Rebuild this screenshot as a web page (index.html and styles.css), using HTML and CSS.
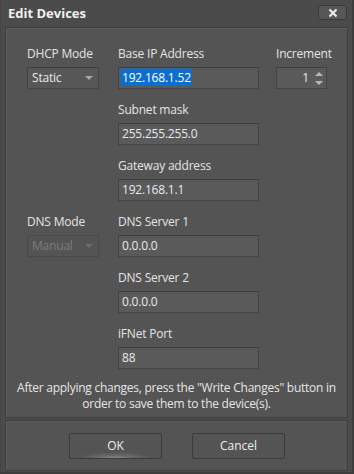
FILE: index.html
```html
<!DOCTYPE html>
<html>
<head>
<meta charset="utf-8">
<link rel="stylesheet" href="styles.css">
</head>
<body>
<div class="window">
  <div class="titlebar">
    <span class="title">Edit Devices</span>
    <button class="close">
      <svg width="10" height="8" viewBox="0 0 10 8"><path d="M1.5 0.5 L8.5 7.5 M8.5 0.5 L1.5 7.5" stroke="#e8e8e8" stroke-width="2.2"/></svg>
    </button>
  </div>
  <div class="panel main">
    <div class="grid">
      <div class="group">
        <div class="label">DHCP Mode</div>
        <div class="select"><span>Static</span><span class="arrow"></span></div>
      </div>
      <div class="group">
        <div class="label">Base IP Address</div>
        <div class="input"><span class="sel">192.168.1.52</span></div>
      </div>
      <div class="group">
        <div class="label">Increment</div>
        <div class="spin"><span class="num">1</span><span class="spinarrows"><span class="up"></span><span class="down"></span></span></div>
      </div>

      <div class="group empty"></div>
      <div class="group">
        <div class="label">Subnet mask</div>
        <div class="input">255.255.255.0</div>
      </div>
      <div class="group empty"></div>

      <div class="group empty"></div>
      <div class="group">
        <div class="label">Gateway address</div>
        <div class="input">192.168.1.1</div>
      </div>
      <div class="group empty"></div>

      <div class="group">
        <div class="label">DNS Mode</div>
        <div class="select disabled"><span>Manual</span><span class="arrow"></span></div>
      </div>
      <div class="group">
        <div class="label">DNS Server 1</div>
        <div class="input">0.0.0.0</div>
      </div>
      <div class="group empty"></div>

      <div class="group empty"></div>
      <div class="group">
        <div class="label">DNS Server 2</div>
        <div class="input">0.0.0.0</div>
      </div>
      <div class="group empty"></div>

      <div class="group empty"></div>
      <div class="group">
        <div class="label">iFNet Port</div>
        <div class="input">88</div>
      </div>
      <div class="group empty"></div>
    </div>
    <p class="note">After applying changes, press the "Write Changes" button in<br>order to save them to the device(s).</p>
  </div>
  <div class="panel footer">
    <button class="btn ok">OK</button>
    <button class="btn">Cancel</button>
  </div>
</div>
</body>
</html>
```

FILE: styles.css
```css
* { box-sizing: border-box; }
html, body {
  margin: 0;
  padding: 0;
  background: #4b4b4b;
}
body {
  font-family: "Open Sans", "Noto Sans", sans-serif;
  font-size: 12px;
  letter-spacing: -0.2px;
  color: #e4e4e4;
}
.window {
  width: 354px;
  height: 474px;
  background: #4b4b4b;
  border-right: 2px solid #3c3c3c;
  border-bottom: 2px solid #3c3c3c;
  border-left: 1px solid #444;
  display: flex;
  flex-direction: column;
}
.titlebar {
  height: 27px;
  display: flex;
  align-items: center;
  justify-content: space-between;
  padding: 0 5px 1px 7px;
}
.title {
  font-weight: bold;
  font-size: 13px;
  letter-spacing: 0;
  color: #f0f0f0;
}
.close {
  width: 29px;
  height: 15px;
  margin-top: -1px;
  border: 1px solid #3a3a3a;
  border-radius: 3px;
  background: #575757;
  display: flex;
  align-items: center;
  justify-content: center;
  padding: 0;
}
.panel {
  margin: 0 4px 0 4px;
  background: #545454;
  border: 1px solid #3e3e3e;
  box-shadow: inset 1px 1px 0 #5c5c5c;
}
.main {
  height: 391px;
  padding: 17px 0 0 0;
}
.grid {
  margin-left: 21px;
  display: grid;
  grid-template-columns: 72px 141px 49px;
  column-gap: 19px;
  row-gap: 12px;
}
.grid .group:nth-child(3n) { margin-left: -2px; }
.group { display: flex; flex-direction: column; }
.label {
  height: 18px;
  line-height: 18px;
  margin-bottom: 4px;
  white-space: nowrap;
}
.input, .select, .spin {
  height: 22px;
  line-height: 20px;
  border: 1px solid #444;
  border-top-color: #3f3f3f;
  background: #5a5a5a;
  padding: 0 3px;
  color: #e6eaee;
}
.sel {
  background: #0a6fd1;
  color: #fff;
  padding: 0 1px 0 1px;
  margin-left: -1px;
  display: inline-block;
  line-height: 17px;
}
.select {
  display: flex;
  justify-content: space-between;
  align-items: center;
  padding: 0 4px 0 4px;
  background: #575757;
}
.arrow {
  width: 0;
  height: 0;
  border-left: 4px solid transparent;
  border-right: 4px solid transparent;
  border-top: 4px solid #a8a8a8;
  margin-right: 1px;
}
.select.disabled {
  background: #545454;
  border-color: #4a4a4a;
  color: #7c7c7c;
}
.select.disabled .arrow { border-top-color: #6c6c6c; }
.spin {
  display: flex;
  align-items: center;
  justify-content: flex-end;
  padding: 0 3px 0 3px;
}
.num { margin-right: 6px; }
.spinarrows {
  display: flex;
  flex-direction: column;
  gap: 5px;
}
.up, .down {
  width: 0;
  height: 0;
  border-left: 4px solid transparent;
  border-right: 4px solid transparent;
}
.up { border-bottom: 4px solid #b8b8b8; }
.down { border-top: 4px solid #b8b8b8; }
.note {
  margin: 11px 0 0 0;
  padding: 0;
  white-space: nowrap;
  letter-spacing: -0.25px;
  text-align: center;
  line-height: 16px;
  color: #e6e6e6;
}
.footer {
  margin-top: 2px;
  height: 51px;
  display: flex;
  align-items: center;
  padding: 0 0 0 63px;
  gap: 30px;
}
.btn {
  width: 93px;
  height: 26px;
  margin-top: 1px;
  border: 1px solid #3b3b3b;
  border-radius: 2px;
  background: #545454;
  color: #ececec;
  font-family: "Open Sans", "Noto Sans", sans-serif;
  font-size: 12px;
  padding: 0 0 2px 0;
}
.btn.ok {
  background: radial-gradient(ellipse 38px 6px at 50% 100%, #8a8a8a 0%, #6a6a6a 40%, #545454 100%);
}
```
